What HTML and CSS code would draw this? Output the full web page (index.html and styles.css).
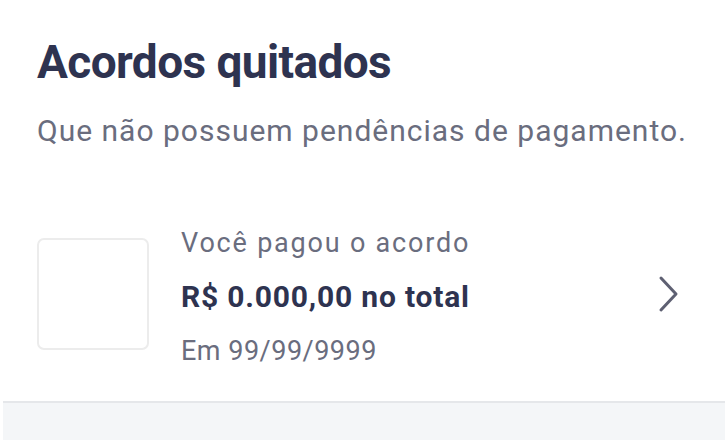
FILE: index.html
```html
<!DOCTYPE html>
<html>
<head>
    <title>Acordos quitados</title>
    <link rel="stylesheet" href="styles.css">
</head>
<body>
    <div class="page">
        <h1 class="title">Acordos quitados</h1>
        <p class="subtitle">Que não possuem pendências de pagamento.</p>

        <!-- Acordo item -->
        <div class="deal">
            <div class="deal-logo"></div>
            <div class="deal-info">
                <span class="deal-label">Você pagou o acordo</span>
                <span class="deal-total">R$ 0.000,00 no total</span>
                <span class="deal-date">Em 99/99/9999</span>
            </div>
            <svg class="chevron" width="22" height="38" viewBox="0 0 22 38">
                <path d="M3 3 L18 19 L3 35" fill="none" stroke="#5e6072" stroke-width="3" stroke-linecap="round" stroke-linejoin="round"/>
            </svg>
        </div>
    </div>
    <div class="footer"></div>
</body>
</html>
```

FILE: styles.css
```css
body {
    margin: 0;
    padding: 0;
    background: #fff;
    font-family: Roboto, "Liberation Sans", sans-serif;
    color: #2e3350;
}
.page {
    padding: 30px 37px 0 37px;
}
.title {
    margin: 0;
    font-size: 46px;
    font-weight: 700;
    letter-spacing: -0.6px;
    line-height: 64px;
}
.subtitle {
    margin: 17px 0 0 0;
    font-size: 30px;
    letter-spacing: 1px;
    line-height: 40px;
    color: #6a6d7e;
}
.deal {
    display: flex;
    align-items: center;
    margin-top: 68px;
    padding-right: 11px;
}
.deal-logo {
    width: 108px;
    height: 108px;
    border: 2px solid #ececec;
    border-radius: 7px;
    flex-shrink: 0;
}
.deal-info {
    display: flex;
    flex-direction: column;
    margin-left: 32px;
    padding-top: 6px;
    flex: 1;
}
.deal-label, .deal-date {
    font-size: 27px;
    line-height: 36px;
    color: #6a6d7e;
}
.deal-label {
    letter-spacing: 1.8px;
}
.deal-date {
    letter-spacing: 0.5px;
}
.deal-total {
    font-size: 30px;
    font-weight: 700;
    letter-spacing: 0.8px;
    line-height: 56px;
    margin: 8px 0;
}
.chevron {
    flex-shrink: 0;
}
.footer {
    margin: 32px 3px 0 3px;
    height: 37px;
    background: #f4f6f8;
    border-top: 2px solid #e5e7ea;
}
```
